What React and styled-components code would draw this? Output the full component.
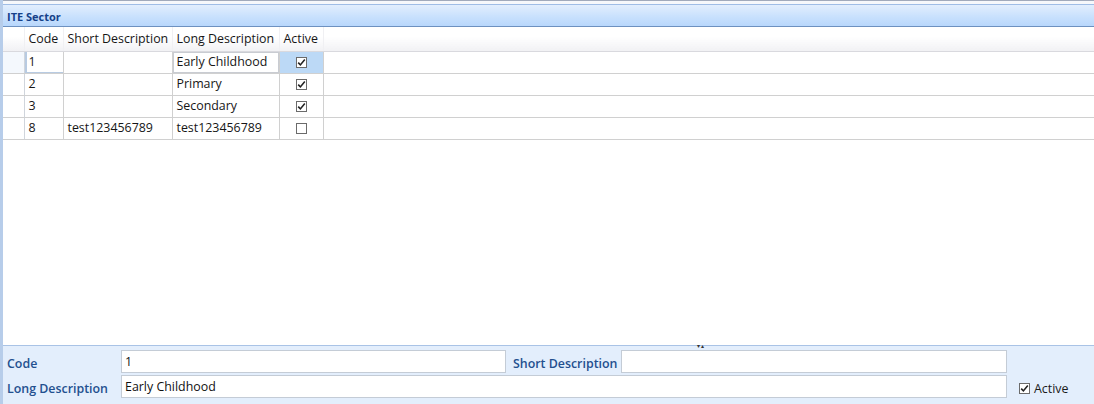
import React from 'react';
import styled, { createGlobalStyle } from 'styled-components';

const GlobalStyle = createGlobalStyle`
  html, body {
    margin: 0;
    padding: 0;
    background: #ffffff;
    font-family: "Open Sans", "Noto Sans", sans-serif;
  }
`;

const rows = [
  { code: '1', short: '', long: 'Early Childhood', active: true },
  { code: '2', short: '', long: 'Primary', active: true },
  { code: '3', short: '', long: 'Secondary', active: true },
  { code: '8', short: 'test123456789', long: 'test123456789', active: false },
];

const Check = ({ checked }) => (
  <CheckBox>
    {checked && (
      <svg width="9" height="9" viewBox="0 0 9 9">
        <path d="M1.2 4.6 L3.4 6.9 L7.8 1.6" fill="none" stroke="#222" strokeWidth="1.6" />
      </svg>
    )}
  </CheckBox>
);

const App = () => {
  return (
    <Window>
      <GlobalStyle />
      <TopEdge />
      <TitleBar>ITE Sector</TitleBar>
      <GridArea>
        <Grid>
          <colgroup>
            <col style={{ width: 21 }} />
            <col style={{ width: 39 }} />
            <col style={{ width: 109 }} />
            <col style={{ width: 107 }} />
            <col style={{ width: 44 }} />
            <col />
          </colgroup>
          <thead>
            <HeadRow>
              <HeadCell />
              <HeadCell>Code</HeadCell>
              <HeadCell>Short Description</HeadCell>
              <HeadCell>Long Description</HeadCell>
              <HeadCell>Active</HeadCell>
              <HeadCell $filler />
            </HeadRow>
          </thead>
          <tbody>
            {rows.map((r, i) => (
              <DataRow key={r.code}>
                <RowHeader $current={i === 0} />
                <Cell $focus={i === 0}>{r.code}</Cell>
                <Cell>{r.short}</Cell>
                <Cell $editing={i === 0}>{r.long}</Cell>
                <Cell $center $selected={i === 0}>
                  <Check checked={r.active} />
                </Cell>
                <Cell $filler />
              </DataRow>
            ))}
          </tbody>
        </Grid>
      </GridArea>
      <DetailPanel>
        <Splitter>▾▴</Splitter>
        <Label>Code</Label>
        <Field value="1" readOnly />
        <span />
        <Label>Short Description</Label>
        <Field value="" readOnly />
        <span />
        <Label>Long Description</Label>
        <Field $wide value="Early Childhood" readOnly />
        <ActiveBox>
          <Check checked />
          <span>Active</span>
        </ActiveBox>
      </DetailPanel>
    </Window>
  );
};

const Window = styled.div`
  width: 1094px;
  height: 404px;
  display: flex;
  flex-direction: column;
  box-sizing: border-box;
  border-left: 3px solid #b7cdea;
  overflow: hidden;
  background: #ffffff;
`;

const TopEdge = styled.div`
  height: 4px;
  border-top: 1px solid #a1aabb;
  background: #f6f8fb;
  box-sizing: border-box;
`;

const TitleBar = styled.div`
  height: 23px;
  box-sizing: border-box;
  border-top: 1px solid #9fbde6;
  border-bottom: 1px solid #6d91c0;
  background: linear-gradient(#e2eefd, #c9e1fd 55%, #b8d7fc);
  color: #15418a;
  font-weight: 700;
  font-size: 11px;
  padding: 4px 0 0 4px;
`;

const GridArea = styled.div`
  flex: 1;
  background: #ffffff;
`;

const Grid = styled.table`
  width: 100%;
  border-collapse: collapse;
  table-layout: fixed;
  font-size: 12.4px;
  color: #161616;
`;

const HeadRow = styled.tr`
  height: 24px;
`;

const DataRow = styled.tr`
  height: 22px;
`;

const HeadCell = styled.th`
  padding: 0 4px;
  font-weight: 400;
  line-height: 14px;
  text-align: left;
  white-space: nowrap;
  background: linear-gradient(#ffffff, #ffffff 40%, #f1f1f4);
  border-bottom: 1px solid #d9d9de;
  border-right: ${(p) => (p.$filler ? 'none' : '1px solid #f0f0f3')};
`;

const RowHeader = styled.td`
  padding: 0;
  border-right: 1px solid #d0d5dc;
  border-bottom: 1px solid #d0d0d0;
  background: ${(p) => (p.$current ? '#f4f8fd' : '#ffffff')};
`;

const Cell = styled.td`
  padding: 0 4px;
  line-height: 14px;
  white-space: nowrap;
  overflow: hidden;
  text-align: ${(p) => (p.$center ? 'center' : 'left')};
  border-bottom: 1px solid #d0d0d0;
  border-right: ${(p) => (p.$filler ? 'none' : '1px solid #d0d0d0')};
  background: ${(p) => (p.$selected ? '#bcd9f6' : '#ffffff')};
  box-shadow: ${(p) =>
    p.$focus
      ? 'inset 2px 0 0 #b8cbe2, inset 0 -1px 0 #b8cbe2'
      : p.$editing
      ? 'inset 0 0 0 1px #c9ccd2'
      : 'none'};
`;

const CheckBox = styled.span`
  display: inline-flex;
  align-items: center;
  justify-content: center;
  width: 11px;
  height: 11px;
  box-sizing: border-box;
  border: 1px solid #6b6b6b;
  background: #ffffff;
  vertical-align: middle;
`;

const DetailPanel = styled.div`
  position: relative;
  height: 59px;
  box-sizing: border-box;
  border-top: 1px solid #a9c3e6;
  background: #e3eefc;
  padding: 4px 0 0 4px;
  display: grid;
  grid-template-columns: 114px 385px 7px 108px 386px 1fr;
  grid-template-rows: 23px 23px;
  row-gap: 2px;
  align-items: center;
`;

const Splitter = styled.span`
  position: absolute;
  top: -4px;
  left: 694px;
  font-size: 6px;
  letter-spacing: 1px;
  color: #333;
`;

const Label = styled.label`
  color: #23508f;
  font-weight: 600;
  font-size: 12.4px;
  padding-top: 3px;
`;

const Field = styled.input`
  grid-column: ${(p) => (p.$wide ? '2 / 6' : 'auto')};
  height: 23px;
  box-sizing: border-box;
  border: 1px solid #c4ccd6;
  background: #ffffff;
  font-family: inherit;
  font-size: 12.4px;
  color: #111;
  padding: 0 3px;
  outline: none;
`;

const ActiveBox = styled.div`
  display: flex;
  align-items: center;
  gap: 4px;
  padding-left: 12px;
  padding-top: 3px;
  font-size: 12.4px;
  color: #1a1a1a;
`;

export default App;
